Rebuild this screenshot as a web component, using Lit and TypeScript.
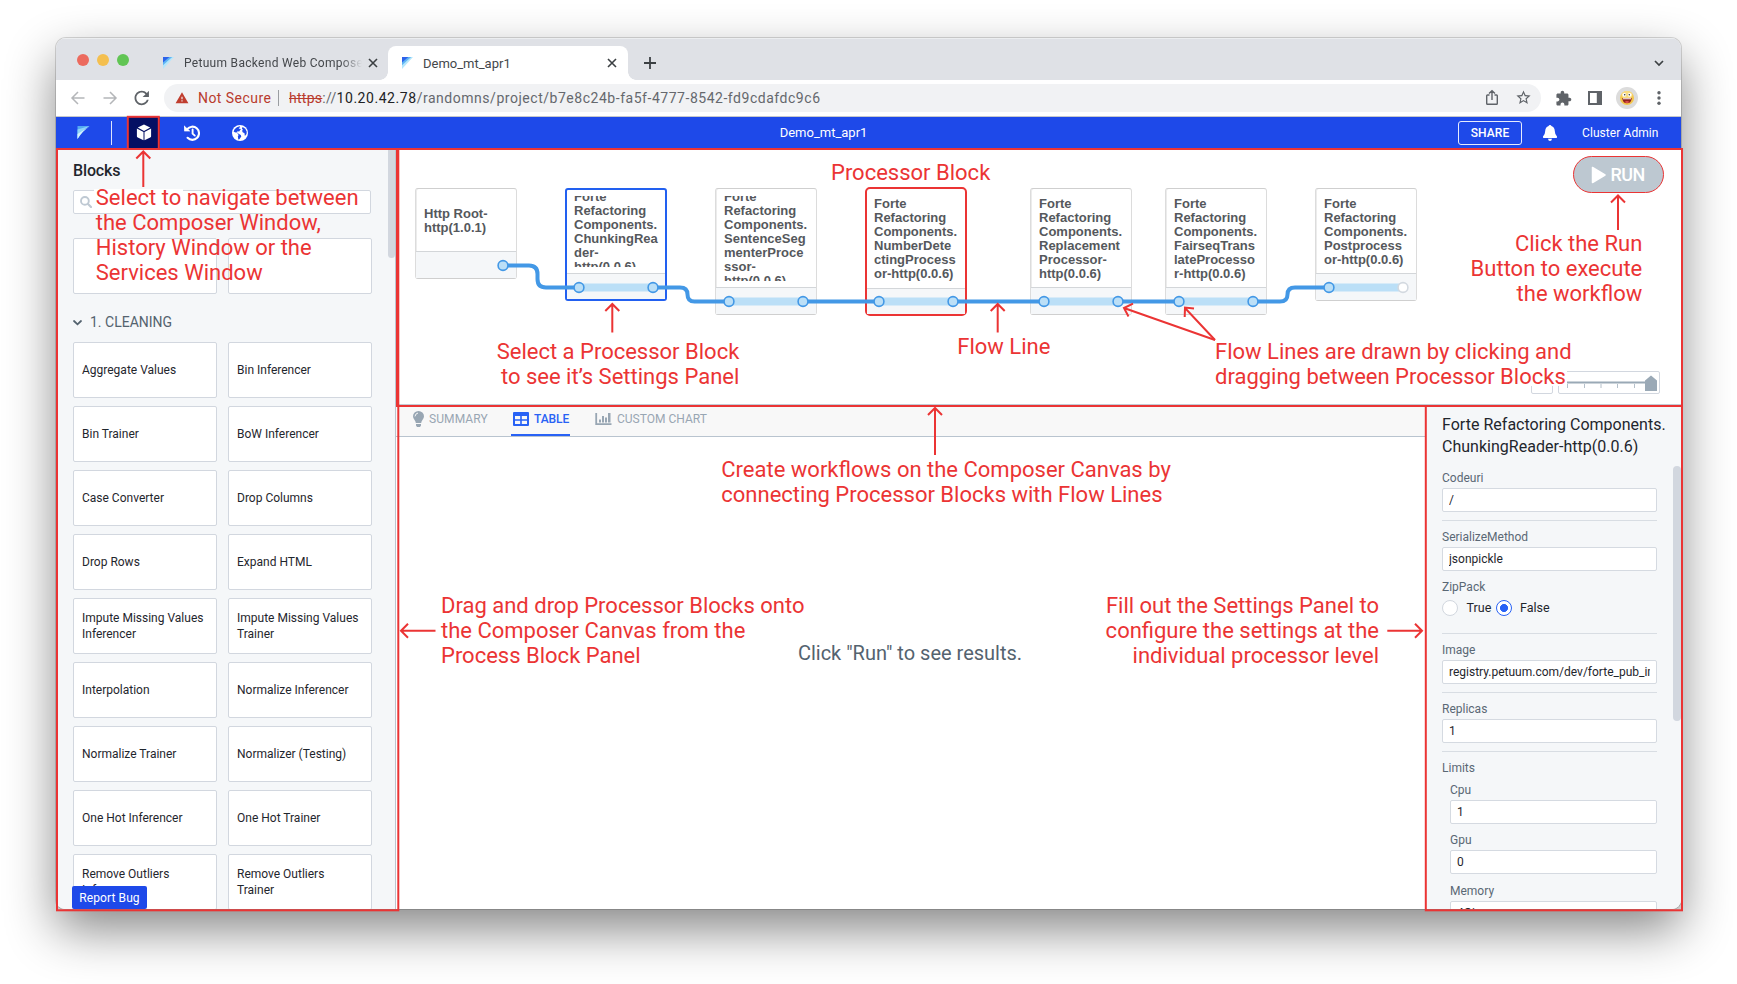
import { LitElement, html, svg, css, nothing } from "lit";
import { customElement, property } from "lit/decorators.js";
import { classMap } from "lit/directives/class-map.js";
import { styleMap } from "lit/directives/style-map.js";

const logo = (size: number) => html`<svg width=${size} height=${size + 1} viewBox="0 0 12 13">
  <path d="M0 0H12L0 13Z" fill="#b5e6fb" /><path d="M0 0H10L0 9Z" fill="#5fb4f4" /><path d="M0 0H7L0 6Z" fill="#2d62ea" />
</svg>`;

@customElement("browser-chrome")
class BrowserChrome extends LitElement {
  static styles = css`
    :host { display: block; font-family: Roboto, sans-serif; }
    .strip { height: 42px; background: #dfe1e6; display: flex; align-items: flex-end; box-shadow: inset 0 1px 0 #eceef0; }
    .lights { display: flex; gap: 8px; padding: 0 0 14.5px 21px; width: 86px; box-sizing: border-box; }
    .light { width: 12px; height: 12px; border-radius: 50%; flex: none; }
    .red { background: #ec6a5e; } .yellow { background: #f4bf4f; } .green { background: #61c554; }
    .tab { height: 34px; display: flex; align-items: center; box-sizing: border-box; color: #44474b; position: relative; }
    .tab svg { flex: none; display: block; }
    .idle { width: 246px; padding: 0 10px 0 21px; font-size: 12px; letter-spacing: .3px; }
    .label { flex: 1; overflow: hidden; white-space: nowrap; margin-left: 10px; }
    .idle .label { margin-right: 6px; -webkit-mask-image: linear-gradient(90deg, #000 88%, transparent 100%); mask-image: linear-gradient(90deg, #000 88%, transparent 100%); }
    .open { width: 240px; background: #fff; border-radius: 8px 8px 0 0; padding: 0 11px 0 14px; font-size: 13px; letter-spacing: 0; }
    .open::before, .open::after { content: ""; position: absolute; bottom: 0; width: 8px; height: 8px; }
    .open::before { left: -8px; background: radial-gradient(circle at 0 0, transparent 7.5px, #fff 8px); }
    .open::after { right: -8px; background: radial-gradient(circle at 100% 0, transparent 7.5px, #fff 8px); }
    .plus { margin: 0 0 11px 16px; }
    .down { margin: 0 17px 11px auto; }
    .strip > svg { display: block; }
    .bar { height: 37px; box-sizing: border-box; border-bottom: 1px solid #c6c8cc; background: #fff; display: flex; align-items: center; padding: 0 12px 0 13px; }
    .bar svg { display: block; flex: none; }
    .nav { display: flex; gap: 14px; width: 95px; flex: none; }
    .pill { width: 1377px; flex: none; height: 28px; box-sizing: border-box; border-radius: 14px; background: #f1f2f4; display: flex; align-items: center; padding: 0 9.5px 0 11px; font-size: 14px; }
    .warn { color: #b93b2d; margin-left: 9px; letter-spacing: .45px; width: 80px; }
    .sep { width: 1px; height: 16px; background: #9a9da1; margin-right: 10px; }
    .url { color: #65686d; letter-spacing: .53px; flex: 1; white-space: nowrap; }
    .url s, .url i { font-style: normal; letter-spacing: .27px; }
    .url s { color: #b93b2d; } .url b { font-weight: 400; color: #202124; letter-spacing: .55px; }
    .acts { display: flex; gap: 14px; }
    .ext { display: flex; align-items: center; gap: 14px; margin-left: 14px; }
    .face { margin-left: -2px; }
  `;
  render() {
    const close = html`<svg width="10" height="10" viewBox="0 0 10 10"><path d="M1 1L9 9M9 1L1 9" stroke="#3c4043" stroke-width="1.6" /></svg>`;
    return html`
      <div class="strip">
        <div class="lights"><i class="light red"></i><i class="light yellow"></i><i class="light green"></i></div>
        <div class="tab idle">${logo(11)}<span class="label">Petuum Backend Web Composer</span>${close}</div>
        <div class="tab open">${logo(11)}<span class="label">Demo_mt_apr1</span>${close}</div>
        <svg class="plus" width="12" height="12" viewBox="0 0 12 12"><path d="M6 0V12M0 6H12" stroke="#3c4043" stroke-width="1.8" /></svg>
        <svg class="down" width="10" height="12" viewBox="0 0 10 12"><path d="M1 4L5 8L9 4" fill="none" stroke="#3c4043" stroke-width="1.7" /></svg>
      </div>
      <div class="bar">
        <div class="nav">
          <svg width="18" height="18" viewBox="0 0 18 18"><path d="M15.5 9H3M9 3L3 9L9 15" fill="none" stroke="#b4b6b9" stroke-width="1.5" /></svg>
          <svg width="18" height="18" viewBox="0 0 18 18"><path d="M2.5 9H15M9 3L15 9L9 15" fill="none" stroke="#b4b6b9" stroke-width="1.5" /></svg>
          <svg width="18" height="18" viewBox="2.3 2 20 20"><path fill="#5f6368" d="M17.65 6.35C16.2 4.9 14.21 4 12 4c-4.42 0-7.99 3.58-7.99 8s3.57 8 7.99 8c3.73 0 6.84-2.55 7.73-6h-2.08c-.82 2.33-3.04 4-5.65 4-3.31 0-6-2.69-6-6s2.69-6 6-6c1.66 0 3.14.69 4.22 1.78L13 11h7V4l-2.35 2.35z" /></svg>
        </div>
        <div class="pill">
          <svg width="14" height="14" viewBox="0 1 24 22"><path fill="#c03d2e" d="M1 21h22L12 2 1 21zm12-3h-2v-2h2v2zm0-4h-2v-4h2v4z" /></svg>
          <span class="warn">Not Secure</span><i class="sep"></i>
          <span class="url"><s>https</s><i>://</i><b>10.20.42.78</b>/randomns/project/b7e8c24b-fa5f-4777-8542-fd9cdafdc9c6</span>
          <div class="acts">
            <svg width="18" height="18" viewBox="0 0 18 18"><path d="M6.5 6H4.5Q3.7 6 3.7 6.8V14.5Q3.7 15.3 4.5 15.3H13.5Q14.3 15.3 14.3 14.5V6.8Q14.3 6 13.5 6H11.5M9 11V2M6 4.6L9 1.8L12 4.6" fill="none" stroke="#5f6368" stroke-width="1.4" /></svg>
            <svg width="17" height="17" viewBox="0 0 24 24"><path fill="#5f6368" d="M22 9.24l-7.19-.62L12 2 9.19 8.63 2 9.24l5.46 4.73L5.82 21 12 17.27 18.18 21l-1.63-7.03L22 9.24zM12 15.4l-3.76 2.27 1-4.28-3.32-2.88 4.38-.38L12 6.1l1.71 4.04 4.38.38-3.32 2.88 1 4.28L12 15.4z" /></svg>
          </div>
        </div>
        <div class="ext">
          <svg width="17" height="17" viewBox="0 0 24 24"><path fill="#5f6368" d="M20.5 11H19V7c0-1.1-.9-2-2-2h-4V3.5C13 2.12 11.88 1 10.5 1S8 2.12 8 3.5V5H4c-1.1 0-1.99.9-1.99 2v3.8H3.5c1.49 0 2.7 1.21 2.7 2.7s-1.21 2.7-2.7 2.7H2V20c0 1.1.9 2 2 2h3.8v-1.5c0-1.49 1.21-2.7 2.7-2.7 1.49 0 2.7 1.21 2.7 2.7V22H17c1.1 0 2-.9 2-2v-4h1.5c1.38 0 2.5-1.12 2.5-2.5S21.88 11 20.5 11z" /></svg>
          <svg width="18" height="16" viewBox="0 0 18 16"><path fill="#5f6368" fill-rule="evenodd" d="M2 1H16V15H2ZM4 3V13H10.8V3Z" /></svg>
          <svg class="face" width="22" height="22" viewBox="0 0 22 22"><circle cx="11" cy="11" r="11" fill="#dcdcdc" /><circle cx="11" cy="11" r="7" fill="#f4c64c" /><ellipse cx="11" cy="8" rx="5.5" ry="4" fill="#f9dc80" /><circle cx="8.3" cy="7.8" r="1.9" fill="#fff" /><circle cx="13.7" cy="7.8" r="1.9" fill="#fff" /><circle cx="8.7" cy="7.8" r=".8" fill="#333" /><circle cx="13.3" cy="7.8" r=".8" fill="#333" /><path d="M6.3 11H15.7Q15.5 16.3 11 16.3T6.3 11Z" fill="#8e1f1c" /><path d="M7 11.2H15V12.3H7Z" fill="#fff" /><path d="M8.5 15Q11 12.8 13.5 15Q11 16.8 8.5 15Z" fill="#e0524d" /></svg>
          <svg width="14" height="16" viewBox="0 0 14 16"><g fill="#5f6368"><circle cx="7" cy="2.8" r="1.7" /><circle cx="7" cy="8" r="1.7" /><circle cx="7" cy="13.2" r="1.7" /></g></svg>
        </div>
      </div>`;
  }
}

@customElement("app-header")
class AppHeader extends LitElement {
  static styles = css`
    :host { display: flex; align-items: center; height: 32px; box-sizing: border-box; padding-bottom: 1px; background: #1e49e9; color: #fff; font: 13px Roboto, sans-serif; }
    svg { display: block; flex: none; }
    .brand { padding-left: 21px; width: 55px; box-sizing: border-box; }
    .rule { width: 1px; height: 24px; background: #fff; opacity: .85; margin-right: 15px; }
    .cell { width: 33px; height: 32px; display: flex; align-items: center; justify-content: center; margin-right: 15px; flex: none; }
    .on { background: #050f63; }
    .title { flex: 1; text-align: center; padding-right: 90px; }
    .left, .right { display: flex; align-items: center; flex: none; }
    .left { width: 223px; } .right { width: 223px; }
    .share { width: 64px; height: 24px; box-sizing: border-box; border: 1px solid #e6ebfd; border-radius: 3px; font-size: 12px; font-weight: 500; letter-spacing: .1px; display: flex; align-items: center; justify-content: center; margin-right: 20px; }
    .user { font-size: 12px; letter-spacing: .08px; margin-left: 24px; padding-top: 1px; white-space: nowrap; }
  `;
  render() {
    return html`
      <div class="left">
        <div class="brand"><svg width="13" height="13" viewBox="0 0 12 13"><path d="M0 0H12Q3 3 0 13Z" fill="#53a9f3" /><path d="M0 3.6L12 0Q4 5 0 13Z" fill="#8ed4fa" /><path d="M0 8L12 .5Q5 5 0 13Z" fill="#d5f3fd" /></svg></div>
        <i class="rule"></i>
        <div class="cell on"><svg width="16" height="17" viewBox="0 0 16 17"><g fill="#fff"><path d="M8 .5L14.2 3.6L8 7L1.8 3.6Z" /><path d="M.9 4.6L7.5 8.1V16.3L1.8 13.6Q.9 13.2.9 12.3Z" /><path d="M15.1 4.6L8.5 8.1V16.3L14.2 13.6Q15.1 13.2 15.1 12.3Z" /></g></svg></div>
        <div class="cell"><svg width="16" height="16" viewBox="0 0 16 16"><path d="M3.2 4.2A6.6 6.6 0 1 1 3.6 12.8" fill="none" stroke="#fff" stroke-width="2.1" stroke-linecap="round" /><path d="M0 .8L.4 6.1H5.8Z" fill="#fff" stroke="#fff" stroke-linejoin="round" stroke-width=".6" /><path d="M8.6 4.4V8.6L10.8 10.6" fill="none" stroke="#fff" stroke-width="1.9" stroke-linecap="round" /></svg></div>
        <div class="cell"><svg width="16" height="16" viewBox="0 0 16 16"><circle cx="8" cy="8" r="8" fill="#fff" /><g fill="#1e49e9"><path d="M7.8 1.2Q4.6 1.5 2.6 4.2L1.6 6.4L3.3 7.5L4.4 7.3L6.1 9L6.5 10.3L5.8 11.5L6.3 14.6L7.4 14.2L9.3 11.4L8.8 10L7 9L5 7.5L5.4 6.2L7.2 6.6L8 5.3L9 4L7.4 3.7L6.6 3L8.2 2.2Z" /><path d="M10.6 1.9L9.9 3.6L10.8 4.5L10.1 6L10.9 7.6L12.4 7.9L12.9 10.9L14.6 9L14.7 6.4L13.3 3.7Z" /></g></svg></div>
      </div>
      <div class="title">Demo_mt_apr1</div>
      <div class="right">
        <div class="share">SHARE</div>
        <svg width="16" height="16" viewBox="0 0 16 16"><path fill="#fff" d="M8 0Q9.2 0 9.4 1.1Q12.6 2.2 12.8 6Q12.9 9.6 15 11.6Q15.4 12.9 14.4 12.9H1.6Q.6 12.9 1 11.6Q3.1 9.6 3.2 6Q3.4 2.2 6.6 1.1Q6.8 0 8 0ZM6 13.8H10Q9.7 16 8 16T6 13.8Z" /></svg>
        <span class="user">Cluster Admin</span>
      </div>`;
  }
}

const BLOCKS = [
  "Aggregate Values", "Bin Inferencer", "Bin Trainer", "BoW Inferencer", "Case Converter", "Drop Columns",
  "Drop Rows", "Expand HTML", "Impute Missing Values Inferencer", "Impute Missing Values Trainer",
  "Interpolation", "Normalize Inferencer", "Normalize Trainer", "Normalizer (Testing)",
  "One Hot Inferencer", "One Hot Trainer", "Remove Outliers Inferencer", "Remove Outliers Trainer",
];

@customElement("block-panel")
class BlockPanel extends LitElement {
  static styles = css`
    :host { display: block; position: relative; background: #f5f7f9; overflow: hidden; padding: 0 24px 0 17px; font-family: Roboto, sans-serif; color: #1f262d; box-sizing: border-box; border-right: 1px solid #bcc5cf; }
    h2 { font-size: 16px; line-height: 20px; font-weight: 500; margin: 12px 0 9px; letter-spacing: -.15px; }
    .search { height: 24px; box-sizing: border-box; border: 1px solid #d2d7df; border-radius: 2px; background: #fff; display: flex; align-items: center; padding-left: 6px; margin-bottom: 24px; }
    .grid { display: grid; grid-template-columns: 144px 144px; gap: 8px 11px; grid-auto-rows: 56px; }
    .card { background: #fff; border: 1px solid #d2d7df; border-radius: 2px; box-sizing: border-box; padding: 0 8px; display: flex; align-items: center; font-size: 12px; line-height: 16px; }
    .group { display: flex; align-items: center; gap: 8px; font-size: 14px; line-height: 20px; color: #54636f; margin: 18px 0 10px; }
    .thumb { position: absolute; right: 0; top: 0; width: 7px; height: 109px; background: #d2d7df; border-radius: 0 0 4px 4px; }
    .bug { position: absolute; left: 16px; bottom: 0; width: 75px; height: 23px; border-radius: 2px; background: #1e49e9; color: #fff; font-size: 12px; line-height: 25px; letter-spacing: .1px; text-align: center; }
  `;
  render() {
    return html`
      <h2>Blocks</h2>
      <div class="search"><svg width="12" height="12" viewBox="0 0 12 12"><circle cx="4.9" cy="4.9" r="3.9" fill="none" stroke="#bfc9d3" stroke-width="1.9" /><path d="M7.8 7.8L11 11" stroke="#bfc9d3" stroke-width="2.2" stroke-linecap="round" /></svg></div>
      <div class="grid"><div class="card"></div><div class="card"></div></div>
      <div class="group"><svg width="9" height="10" viewBox="0 0 9 10"><path d="M1 4L4.5 7.3L8 4" fill="none" stroke="#54636f" stroke-width="1.8" stroke-linecap="round" /></svg>1. CLEANING</div>
      <div class="grid">${BLOCKS.map((b) => html`<div class="card">${b}</div>`)}</div>
      <div class="thumb"></div>
      <div class="bug">Report Bug</div>`;
  }
}

interface FlowNode { x: number; h: number; lines: string[]; kind?: string; noIn?: boolean }
const F = ["Forte", "Refactoring", "Components."];
const NODES: FlowNode[] = [
  { x: 19, h: 91, lines: ["Http Root-", "http(1.0.1)"], noIn: true },
  { x: 169, h: 113, lines: [...F, "ChunkingRea", "der-", "http(0.0.6)"], kind: "selected" },
  { x: 319, h: 127, lines: [...F, "SentenceSeg", "menterProce", "ssor-", "http(0.0.6)"] },
  { x: 469, h: 127, lines: [...F, "NumberDete", "ctingProcess", "or-http(0.0.6)"], kind: "marked" },
  { x: 634, h: 127, lines: [...F, "Replacement", "Processor-", "http(0.0.6)"] },
  { x: 769, h: 127, lines: [...F, "FairseqTrans", "lateProcesso", "r-http(0.0.6)"] },
  { x: 919, h: 113, lines: [...F, "Postprocess", "or-http(0.0.6)"] },
];
const WIRES = [
  "M107 116.5H133Q141.5 116.5 141.5 125V130Q141.5 138.5 150 138.5H183",
  "M257 138.5H284Q291.5 138.5 291.5 145.5Q291.5 152.5 298.5 152.5H333",
  "M407 152.5H483", "M557 152.5H648", "M722 152.5H783",
  "M857 152.5H884Q891.5 152.5 891.5 145.5Q891.5 138.5 899 138.5H933",
];

@customElement("flow-canvas")
class FlowCanvas extends LitElement {
  static styles = css`
    :host { display: block; position: relative; background: #fff; overflow: hidden; box-sizing: border-box; border-bottom: 1px solid #c3ccd5; }
    .node { position: absolute; top: 39px; width: 102px; box-sizing: border-box; border: 1px solid #cfcfcf; border-left-color: #dcdcdc; border-right-color: #dcdcdc; box-shadow: inset 1px 0 0 #ececec; border-radius: 3px; background: #fff; display: flex; flex-direction: column; }
    .selected { border: 2px solid #2260f0; box-shadow: none; }
    .marked { border: 2px solid #eb3434; border-radius: 5px; box-shadow: none; margin-top: -1px; }
    .text { flex: 1; min-height: 0; margin: 7px 0 6px 8px; overflow: hidden; display: flex; flex-direction: column; justify-content: center; font: bold 13px/14px "Liberation Sans", sans-serif; color: #55585c; white-space: nowrap; }
    .selected .text, .marked .text { margin-left: 7px; margin-top: 6px; }
    .line { flex: none; height: 14px; }
    .foot { height: 26px; border-top: 1px solid #d3d6d9; background: #f5f7f9; flex: none; }
    .selected .foot, .marked .foot { height: 25px; }
    .wires { position: absolute; left: 0; top: 0; }
    .run { position: absolute; left: 1176.5px; top: 7px; width: 91px; height: 37px; box-sizing: border-box; border: 1.5px solid #eb3434; border-radius: 19px; background: #bdc8d1; color: #fff; display: flex; align-items: center; gap: 5px; padding-left: 17px; font: 500 18px Roboto, sans-serif; letter-spacing: -.5px; }
    .tool { position: absolute; left: 1135px; top: 222px; display: flex; gap: 5px; }
    .fit { width: 22px; height: 23px; box-sizing: border-box; border: 1px solid #d2d7df; border-radius: 2px; }
    .zoom { width: 102px; height: 23px; box-sizing: border-box; border: 1px solid #d2d7df; border-radius: 2px; }
    .zoom svg { display: block; }
  `;
  render() {
    return html`
      ${NODES.map((n) => html`<div class=${classMap({ node: true, [n.kind ?? "plain"]: true })} style=${styleMap({ left: n.x + "px", height: n.h + (n.kind === "marked" ? 2 : 0) + "px" })}>
        <div class="text">${n.lines.map((l) => html`<span class="line">${l}</span>`)}</div><div class="foot"></div>
      </div>`)}
      <svg class="wires" width="1285" height="257">
        ${NODES.map((n) => n.noIn ? nothing : svg`<rect x=${n.x + 14} y=${39 + n.h - 17.5} width="74" height="8" fill="#bbdff7" />`)}
        ${WIRES.map((d) => svg`<path d=${d} fill="none" stroke="#4398e6" stroke-width="4" />`)}
        ${NODES.map((n, i) => {
          const y = i === 0 ? 116.5 : 39 + n.h - 13.5;
          const last = i === NODES.length - 1;
          return svg`
            ${n.noIn ? nothing : svg`<circle cx=${n.x + 14} cy=${y} r="4.9" fill="#bbdff7" stroke="#4398e6" stroke-width="1.6" />`}
            <circle cx=${n.x + 88} cy=${y} r="4.9" fill=${last ? "#fff" : "#bbdff7"} stroke=${last ? "#d3d9e0" : "#4398e6"} stroke-width="1.6" />`;
        })}
      </svg>
      <div class="run"><svg width="15" height="18" viewBox="0 0 15 18"><path d="M1.5 1.5V16.5L14 9Z" fill="#fff" stroke="#fff" stroke-width="1.5" stroke-linejoin="round" /></svg>RUN</div>
      <div class="tool">
        <div class="fit"></div>
        <div class="zoom"><svg width="100" height="21" viewBox="0 0 100 21"><path d="M6 10.5H88" stroke="#9aa9b6" stroke-width="2" /><path d="M8.5 12V16M25.5 12V16M42 12V16M58.5 12V16M75.5 12V16" stroke="#b5c0ca" stroke-width="1" /><path d="M86 19V8.5L92 3.5L98 8.5V19Z" fill="#9aa9b6" /></svg></div>
      </div>`;
  }
}

@customElement("result-view")
class ResultView extends LitElement {
  static styles = css`
    :host { display: flex; flex-direction: column; background: #fff; font-family: Roboto, sans-serif; }
    .tabs { height: 32px; box-sizing: border-box; background: #f8f8f8; border-bottom: 1px solid #b9c4cf; display: flex; align-items: stretch; padding-left: 14px; color: #98a6b3; font-size: 12px; }
    .tab { display: flex; align-items: center; gap: 5px; box-sizing: border-box; padding: 0 0 3px; white-space: nowrap; }
    .tab svg { flex: none; }
    .sum { width: 101px; padding-left: 1px; gap: 3px; letter-spacing: .1px; }
    .on { color: #2862f5; font-weight: 500; border-bottom: 2px solid #2862f5; padding: 0 0 1px 2px; width: 59px; margin-right: 25px; letter-spacing: -.1px; }
    .empty { flex: 1; display: flex; align-items: center; justify-content: center; font-size: 20px; color: #54636f; padding: 0 1px 41px 0; }
  `;
  render() {
    return html`
      <div class="tabs">
        <div class="tab sum"><svg width="15" height="16" viewBox="0 0 15 16"><path fill="#98a6b3" d="M7.5 0A5.5 5.3 0 0 1 13 5.3Q13 7.4 11.3 9.3Q10.4 10.4 10.2 12H4.8Q4.6 10.4 3.7 9.3Q2 7.4 2 5.3A5.5 5.3 0 0 1 7.5 0ZM5 13H10V14.4L9 16H6L5 14.4Z" /><path d="M4 5.4Q4.3 2.6 7 2" fill="none" stroke="#f8f8f8" stroke-width="1" /></svg>SUMMARY</div>
        <div class="tab on"><svg width="16" height="14" viewBox="0 0 16 14"><path fill="#2862f5" fill-rule="evenodd" d="M1 0H15Q16 0 16 1V13Q16 14 15 14H1Q0 14 0 13V1Q0 0 1 0ZM2 4V7.2H7.2V4ZM8.8 4V7.2H14V4ZM2 8.8V12H7.2V8.8ZM8.8 8.8V12H14V8.8Z" /></svg>TABLE</div>
        <div class="tab"><svg width="17" height="14" viewBox="0 0 17 14"><path d="M1.2 1V12.2H16.5" fill="none" stroke="#98a6b3" stroke-width="1.8" /><path fill="#98a6b3" d="M4 7.5H6V10.5H4ZM7 4H9V10.5H7ZM10 5.5H12V10.5H10ZM13 1H15.5V10.5H13Z" /></svg>CUSTOM CHART</div>
      </div>
      <div class="empty">Click "Run" to see results.</div>`;
  }
}

@customElement("setting-field")
class SettingField extends LitElement {
  @property() label = "";
  @property() value = "";
  static styles = css`
    :host { display: block; font: 12px/16px Roboto, sans-serif; }
    .label { color: #5a6875; margin-bottom: 2px; }
    .box { height: 24px; box-sizing: border-box; border: 1px solid #d5dae1; border-radius: 2px; background: #fff; padding: 3px 6px; color: #1f262d; }
    .clip { overflow: hidden; white-space: nowrap; }
  `;
  render() {
    return html`<div class="label">${this.label}</div><div class="box"><div class="clip">${this.value}</div></div>`;
  }
}

@customElement("settings-panel")
class SettingsPanel extends LitElement {
  static styles = css`
    :host { display: block; position: relative; background: #f5f7f9; overflow: hidden; padding: 9px 0 0 16px; box-sizing: border-box; font-family: Roboto, sans-serif; color: #1f262d; border-left: 1px solid #bcc5cf; }
    h3 { font-size: 16px; line-height: 22px; font-weight: 400; margin: 0 0 11.5px; white-space: nowrap; letter-spacing: .02px; }
    .form { width: 215px; display: flex; flex-direction: column; gap: 8px; }
    .hr { height: 1px; background: #d8dde3; }
    .name { font-size: 12px; line-height: 16px; color: #5a6875; }
    .radios { display: flex; align-items: center; height: 16px; font-size: 12.5px; margin: -3px 0 9px; }
    .dot { width: 16px; height: 16px; box-sizing: border-box; border: 1px solid #d2d7df; border-radius: 50%; background: #fff; margin-right: 8.5px; flex: none; }
    .dot.on { border-color: #2862f5; background: radial-gradient(circle, #2862f5 3.7px, #fff 4.3px); }
    .first { width: 29px; }
    .sub { display: flex; flex-direction: column; gap: 8.5px; padding-left: 8px; margin-top: -2px; }
    .thumb { position: absolute; right: 0; top: 60.5px; width: 8px; height: 255px; border-radius: 4px; background: #d2d7df; }
  `;
  render() {
    return html`
      <h3>Forte Refactoring Components.<br />ChunkingReader-http(0.0.6)</h3>
      <div class="form">
        <setting-field label="Codeuri" value="/"></setting-field>
        <div class="hr"></div>
        <setting-field label="SerializeMethod" value="jsonpickle"></setting-field>
        <div class="name">ZipPack</div>
        <div class="radios"><i class="dot"></i><span class="first">True</span><i class="dot on"></i><span>False</span></div>
        <div class="hr"></div>
        <setting-field label="Image" value="registry.petuum.com/dev/forte_pub_image"></setting-field>
        <div class="hr"></div>
        <setting-field label="Replicas" value="1"></setting-field>
        <div class="hr"></div>
        <div class="name">Limits</div>
        <div class="sub">
          <setting-field label="Cpu" value="1"></setting-field>
          <setting-field label="Gpu" value="0"></setting-field>
          <setting-field label="Memory" value="4Gi"></setting-field>
        </div>
      </div>
      <div class="thumb"></div>`;
  }
}

interface Note { x: number; y: number; end?: boolean; lines: string[] }
const NOTES: Note[] = [
  { x: 95.8, y: 205, lines: ["Select to navigate between", "the Composer Window,", "History Window or the", "Services Window"] },
  { x: 831, y: 180, lines: ["Processor Block"] },
  { x: 957.3, y: 354, lines: ["Flow Line"] },
  { x: 739.3, y: 359, end: true, lines: ["Select a Processor Block", "to see it’s Settings Panel"] },
  { x: 1215, y: 359, lines: ["Flow Lines are drawn by clicking and", "dragging between Processor Blocks"] },
  { x: 1642.3, y: 251, end: true, lines: ["Click the Run", "Button to execute", "the workflow"] },
  { x: 721.3, y: 477, lines: ["Create workflows on the Composer Canvas by", "connecting Processor Blocks with Flow Lines"] },
  { x: 441, y: 613, lines: ["Drag and drop Processor Blocks onto", "the Composer Canvas from the", "Process Block Panel"] },
  { x: 1379, y: 613, end: true, lines: ["Fill out the Settings Panel to", "configure the settings at the", "individual processor level"] },
];
const ARROWS = [
  "M143.3 187V152M136.3 158.5L143.3 151.5L150.3 158.5",
  "M612.3 332.5V304M605.3 311L612.3 304L619.3 311",
  "M997.7 332.5V304M990.7 311L997.7 304L1004.7 311",
  "M1618 230V196M1611 202.5L1618 195.5L1625 202.5",
  "M935 455V408.5M928 415L935 408L942 415",
  "M435.5 630.7H401.5M408 623.7L401 630.7L408 637.7",
  "M1387.3 630.7H1422M1415 623.7L1422 630.7L1415 637.7",
  "M1215 340L1124 308M1133 303.7L1124 308L1128.5 316.5",
  "M1215 340L1185 308M1194 308.5L1185 307.5L1184.7 317",
];

@customElement("note-layer")
class NoteLayer extends LitElement {
  static styles = css`
    :host { display: block; position: absolute; inset: 0; pointer-events: none; }
    svg { display: block; }
    .note { font: 22px Roboto, sans-serif; fill: #eb3434; }
    .mark { fill: none; stroke: #eb3434; stroke-width: 2; }
  `;
  render() {
    return html`<svg width="1737" height="984">
      <rect x="94" y="189" width="89" height="6" fill="#fff" />
      <rect x="1215" y="366" width="352" height="20" fill="#fff" />
      <rect class="mark" x="57" y="149" width="341.3" height="761.3" />
      <rect class="mark" x="397" y="149" width="1285" height="257" />
      <rect class="mark" x="1425.8" y="406" width="256.2" height="504.3" />
      <rect class="mark" x="127.8" y="116.8" width="31" height="32.2" stroke-width="1.5" />
      ${ARROWS.map((d) => svg`<path class="mark" d=${d} />`)}
      ${NOTES.map((n) => n.lines.map((l, i) => svg`<text class="note" x=${n.x} y=${n.y + i * 25} text-anchor=${n.end ? "end" : "start"}>${l}</text>`))}
    </svg>`;
  }
}

@customElement("app-root")
class AppRoot extends LitElement {
  static styles = css`
    :host { display: block; position: relative; width: 1737px; height: 984px; box-sizing: border-box; padding: 38px 0 0 56px; background: #fff; overflow: hidden; }
    .window { width: 1625px; height: 871px; border-radius: 10px 10px 9px 9px; overflow: hidden; display: flex; flex-direction: column; background: #fff; box-shadow: 0 0 0 1px rgba(0, 0, 0, .15), 0 21px 50px rgba(0, 0, 0, .47); }
    .body { flex: 1; min-height: 0; display: grid; grid-template-columns: 340px 1fr; }
    .main { display: grid; grid-template-rows: 256px 1fr; min-height: 0; }
    .lower { display: grid; grid-template-columns: 1fr 256px; min-height: 0; }
    .body > *, .lower > * { min-height: 0; min-width: 0; }
  `;
  render() {
    return html`
      <div class="window">
        <browser-chrome></browser-chrome>
        <app-header></app-header>
        <div class="body">
          <block-panel></block-panel>
          <div class="main">
            <flow-canvas></flow-canvas>
            <div class="lower"><result-view></result-view><settings-panel></settings-panel></div>
          </div>
        </div>
      </div>
      <note-layer></note-layer>`;
  }
}
